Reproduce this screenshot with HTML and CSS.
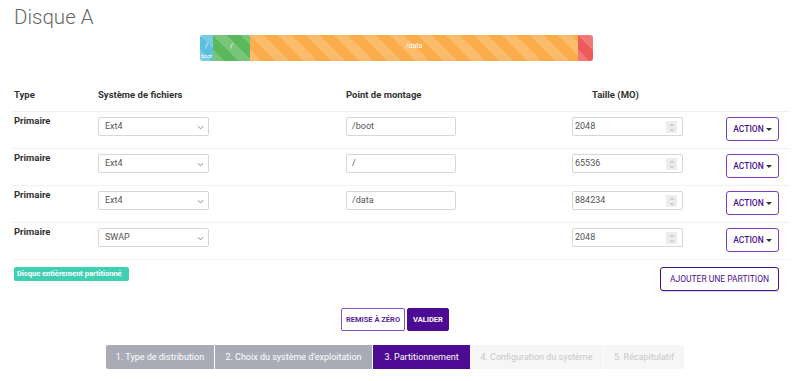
FILE: index.html
```html
<!DOCTYPE html>
<html lang="fr">
<head>
<meta charset="utf-8">
<link rel="stylesheet" href="styles.css">
</head>
<body>
<div class="page">
  <h1 class="title">Disque A</h1>
  <div class="bar">
    <div class="seg seg-blue" style="width:13px"><span class="seg-label">/</span><span class="seg-label small">boot</span></div>
    <div class="seg seg-green" style="width:37px"><span class="seg-label">/</span></div>
    <div class="seg seg-orange" style="width:328px"><span class="seg-label">/data</span></div>
    <div class="seg seg-red" style="width:15px"></div>
  </div>

  <div class="table">
    <div class="row head">
      <div class="cell">Type</div>
      <div class="cell">Système de fichiers</div>
      <div class="cell">Point de montage</div>
      <div class="cell size-head">Taille (MO)</div>
      <div class="cell"></div>
    </div>

    <div class="row">
      <div class="cell type">Primaire</div>
      <div class="cell"><div class="select">Ext4<svg class="chev" viewBox="0 0 8 5" width="7" height="5"><path d="M1 1l3 3 3-3" fill="none" stroke="#777" stroke-width="1"/></svg></div></div>
      <div class="cell"><div class="input">/boot</div></div>
      <div class="cell"><div class="number">2048<span class="spin"><svg viewBox="0 0 8 12" width="6" height="9"><path d="M1.5 4l2.5-2.5 2.5 2.5M1.5 8l2.5 2.5 2.5-2.5" fill="none" stroke="#999" stroke-width="0.9"/></svg></span></div></div>
      <div class="cell"><button class="btn-action">ACTION <span class="caret"></span></button></div>
    </div>

    <div class="row">
      <div class="cell type">Primaire</div>
      <div class="cell"><div class="select">Ext4<svg class="chev" viewBox="0 0 8 5" width="7" height="5"><path d="M1 1l3 3 3-3" fill="none" stroke="#777" stroke-width="1"/></svg></div></div>
      <div class="cell"><div class="input">/</div></div>
      <div class="cell"><div class="number">65536<span class="spin"><svg viewBox="0 0 8 12" width="6" height="9"><path d="M1.5 4l2.5-2.5 2.5 2.5M1.5 8l2.5 2.5 2.5-2.5" fill="none" stroke="#999" stroke-width="0.9"/></svg></span></div></div>
      <div class="cell"><button class="btn-action">ACTION <span class="caret"></span></button></div>
    </div>

    <div class="row">
      <div class="cell type">Primaire</div>
      <div class="cell"><div class="select">Ext4<svg class="chev" viewBox="0 0 8 5" width="7" height="5"><path d="M1 1l3 3 3-3" fill="none" stroke="#777" stroke-width="1"/></svg></div></div>
      <div class="cell"><div class="input">/data</div></div>
      <div class="cell"><div class="number">884234<span class="spin"><svg viewBox="0 0 8 12" width="6" height="9"><path d="M1.5 4l2.5-2.5 2.5 2.5M1.5 8l2.5 2.5 2.5-2.5" fill="none" stroke="#999" stroke-width="0.9"/></svg></span></div></div>
      <div class="cell"><button class="btn-action">ACTION <span class="caret"></span></button></div>
    </div>

    <div class="row">
      <div class="cell type">Primaire</div>
      <div class="cell"><div class="select">SWAP<svg class="chev" viewBox="0 0 8 5" width="7" height="5"><path d="M1 1l3 3 3-3" fill="none" stroke="#777" stroke-width="1"/></svg></div></div>
      <div class="cell"></div>
      <div class="cell"><div class="number">2048<span class="spin"><svg viewBox="0 0 8 12" width="6" height="9"><path d="M1.5 4l2.5-2.5 2.5 2.5M1.5 8l2.5 2.5 2.5-2.5" fill="none" stroke="#999" stroke-width="0.9"/></svg></span></div></div>
      <div class="cell"><button class="btn-action">ACTION <span class="caret"></span></button></div>
    </div>
  </div>

  <div class="footer-row">
    <span class="badge">Disque entièrement partitionné</span>
    <button class="btn-add">AJOUTER UNE PARTITION</button>
  </div>

  <div class="actions">
    <button class="btn-reset">REMISE À ZÉRO</button>
    <button class="btn-valid">VALIDER</button>
  </div>

  <div class="steps">
    <div class="step done" style="width:109px">1. Type de distribution</div>
    <div class="step done" style="width:158px">2. Choix du système d'exploitation</div>
    <div class="step active" style="width:97px">3. Partitionnement</div>
    <div class="step todo" style="width:134px">4. Configuration du système</div>
    <div class="step todo" style="width:81px">5. Récapitulatif</div>
  </div>
</div>
</body>
</html>
```
FILE: styles.css
```css
* { box-sizing: border-box; }
html, body { margin: 0; padding: 0; background: #fff; }
body { font-family: Roboto, "Noto Sans", "Liberation Sans", sans-serif; color: #333; }
.page { padding: 0 10px 0 12px; width: 800px; height: 381px; overflow: hidden; }

.title {
  margin: 0;
  padding: 5px 0 0 2px;
  font-weight: 300;
  font-size: 20.5px;
  line-height: 25px;
  color: #666;
}

.bar {
  margin: 5px 0 0 188px;
  width: 393px;
  height: 26px;
  display: flex;
  border-radius: 3px;
  overflow: hidden;
  background: #f5f5f5;
}
.seg {
  height: 100%;
  color: #fff;
  text-align: center;
  font-size: 7px;
  background-image: linear-gradient(45deg, rgba(255,255,255,.18) 25%, transparent 25%, transparent 50%, rgba(255,255,255,.18) 50%, rgba(255,255,255,.18) 75%, transparent 75%, transparent);
  background-size: 28px 28px;
  padding-top: 5px;
  line-height: 12px;
}
.seg-blue { background-color: #5bc0de; }
.seg-green { background-color: #5cb85c; }
.seg-orange { background-color: #fbad4c; }
.seg-red { background-color: #ee5a5a; }
.seg-label { display: block; }
.seg-label.small { font-size: 5.5px; line-height: 7px; margin-top: 1px; }

.table { margin-top: 19px; }
.row {
  display: grid;
  grid-template-columns: 84px 248px 226px 154px 64px;
  padding: 5px 0 0 2px;
  height: 37px;
  border-top: 1px solid #f0f0f0;
}
.row.head {
  border-top: none;
  height: 31px;
  padding-top: 9px;
  font-weight: 700;
  font-size: 9.5px;
}
.size-head { padding-left: 20px; }
.cell { font-size: 9.5px; }
.type { font-weight: 700; margin-top: -2px; }

.select, .input, .number {
  height: 19px;
  border: 1px solid #d6d6d6;
  border-radius: 2px;
  font-size: 9px;
  color: #555;
  line-height: 17px;
  padding-left: 6px;
  position: relative;
  display: flex;
  align-items: center;
}
.select { width: 111px; }
.chev { position: absolute; right: 4px; top: 7px; }
.input { width: 110px; padding-left: 5px; }
.number { width: 111px; padding-left: 2px; }
.spin {
  position: absolute;
  right: 5px;
  top: 3px;
  width: 11px;
  height: 12px;
  background: #ececec;
  border-radius: 1px;
  display: flex;
  align-items: center;
  justify-content: center;
}

.btn-action {
  width: 53px;
  height: 24px;
  border: 1px solid #7e3cc8;
  border-radius: 3px;
  background: #fff;
  color: #4d0e97;
  font-family: inherit;
  font-size: 8.5px;
  font-weight: 500;
  padding: 0;
  display: flex;
  align-items: center;
  justify-content: center;
  gap: 2px;
}
.caret {
  display: inline-block;
  width: 0; height: 0;
  border-left: 3px solid transparent;
  border-right: 3px solid transparent;
  border-top: 3px solid #333;
}

.footer-row {
  display: flex;
  justify-content: space-between;
  align-items: flex-start;
  padding: 7px 11px 0 2px;
  border-top: 1px solid #f4f4f4;
}
.badge {
  background: #3fd0b1;
  color: #fff;
  font-size: 7.5px;
  font-weight: 700;
  padding: 0 3px;
  height: 14px;
  line-height: 14px;
  border-radius: 2px;
  width: 115px;
  white-space: nowrap;
}
.btn-add {
  width: 119px;
  height: 24px;
  border: 1px solid #4d0e97;
  border-radius: 3px;
  background: #fff;
  color: #4d0e97;
  font-family: inherit;
  font-size: 8.5px;
  padding: 0;
  box-shadow: 0 1px 1px rgba(0,0,0,.15);
}

.actions {
  display: flex;
  justify-content: center;
  gap: 2px;
  margin: 17px 0 0 -12px;
  padding-left: 0;
}
.btn-reset, .btn-valid {
  height: 23px;
  border-radius: 2px;
  font-family: inherit;
  font-size: 7.5px;
  font-weight: 700;
  padding: 0;
}
.btn-reset {
  width: 64px;
  background: #fff;
  border: 1px solid #8a4fcf;
  color: #5a1fa0;
}
.btn-valid {
  width: 42px;
  background: #4d0a93;
  border: 1px solid #4d0a93;
  color: #fff;
}

.steps {
  display: flex;
  margin: 14px 0 0 94px;
  height: 24px;
}
.step {
  font-size: 9px;
  line-height: 24px;
  text-align: center;
  white-space: nowrap;
}
.step.done { background: #a9abb7; color: #fff; border-right: 1px solid #fff; }
.step.done:first-child { border-radius: 2px 0 0 2px; }
.step.active { background: #4d0a93; color: #fff; }
.step.todo { background: #f6f6f6; color: #c8c8c8; border-right: 1px solid #fff; }
```
